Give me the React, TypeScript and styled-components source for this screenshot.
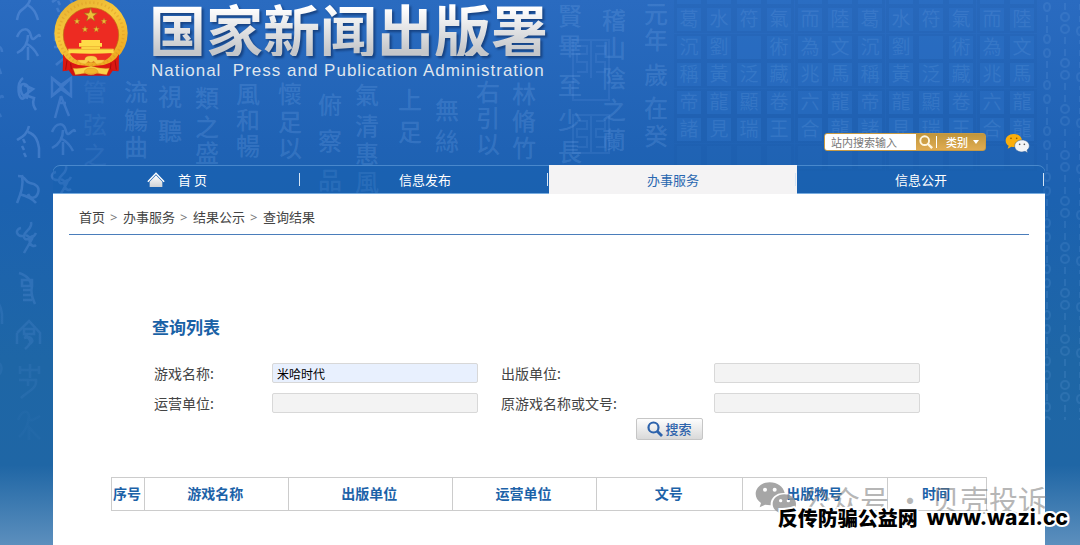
import React from 'react';
import styled, { createGlobalStyle } from 'styled-components';

const sans = `"Noto Sans", "Noto Sans CJK SC", sans-serif`;
const cjk = `"Noto Sans CJK SC", "Liberation Sans", sans-serif`;

const GlobalStyle = createGlobalStyle`
  * { box-sizing: border-box; }
  body { margin: 0; font-family: ${cjk}; color: #444; background: #5c8fbd; }
  a { color: inherit; text-decoration: none; }
`;

const Page = styled.div`
  position: relative;
  min-height: 100vh;
  padding: 0 35px 0 53px;
  overflow: hidden;
  display: flex;
  flex-direction: column;
  background: linear-gradient(#2a6bc0 0, #1f62b4 150px, #1c62b0 200px, #1e66a6 360px, #1f66a5 465px, #5c8fbd 545px);
`;

const Backdrop = styled.svg`
  position: absolute;
  left: 0;
  top: 0;
`;

const Header = styled.header`
  position: relative;
  height: 165px;
  display: flex;
  flex-direction: column;
  justify-content: space-between;
`;

const Brand = styled.div`
  display: flex;
  gap: 21px;
  padding-left: 1px;
`;

const BrandText = styled.div`
  display: flex;
  flex-direction: column;
`;

const SiteName = styled.h1`
  margin: 0;
  font-size: 57px;
  line-height: 56px;
  font-weight: 700;
  white-space: nowrap;
  color: transparent;
  background: linear-gradient(#fff 8px, #c4c6c9 52px);
  background-clip: text;
  -webkit-background-clip: text;
  filter: drop-shadow(2px 2px 1px rgba(10, 40, 90, 0.6));
`;

const SiteNameEn = styled.p`
  margin: 5px 0 0 2px;
  font: 17px/20px "Liberation Sans", Arial, sans-serif;
  letter-spacing: 1px;
  white-space: pre;
  color: #dfe5ee;
`;

const Tools = styled.div`
  display: flex;
  justify-content: flex-end;
  align-items: center;
  gap: 19px;
  padding: 0 15px 12px 0;
`;

const SiteSearch = styled.form`
  display: flex;
  align-items: center;
  width: 162px;
  height: 18px;
  border: 1px solid #c79a45;
  border-radius: 3px;
  overflow: hidden;
  background: linear-gradient(#c0963c, #e0ac52);
`;

const SiteSearchInput = styled.input`
  width: 91px;
  height: 16px;
  padding: 0 6px;
  border: 0;
  outline: 0;
  background: #fff;
  font: 11px/16px ${cjk};
  &::placeholder { color: #777; opacity: 1; }
`;

const SiteSearchButton = styled.button`
  display: flex;
  width: 21px;
  height: 12px;
  padding: 0 3px;
  border: 0;
  border-right: 1px solid #fff;
  align-items: center;
  background: none;
`;

const CategorySelect = styled.select`
  flex: 1;
  height: 16px;
  padding: 0 0 0 9px;
  border: 0;
  appearance: none;
  color: #fff;
  font: 500 11px/16px ${cjk};
  background: url("data:image/svg+xml,%3Csvg xmlns='http://www.w3.org/2000/svg' width='6' height='5'%3E%3Cpath d='M0 0h6L3 4z' fill='white'/%3E%3C/svg%3E") no-repeat right 6px center;
`;

const WeChatLink = styled.a`
  display: flex;
  padding-top: 2px;
`;

const Nav = styled.nav`
  position: relative;
  display: grid;
  grid-template-columns: repeat(4, 1fr);
  height: 29px;
  border-radius: 7px 7px 0 0;
  background: rgba(20, 95, 175, 0.3);
  box-shadow: inset 0 1px rgba(120, 175, 230, 0.5), inset 0 -1px #78acdf;
`;

const NavLink = styled.a<{ $active?: boolean }>`
  position: relative;
  display: flex;
  align-items: center;
  justify-content: center;
  gap: 13px;
  font-size: 13px;
  line-height: 20px;
  color: ${p => (p.$active ? '#2a67b0' : '#fff')};
  background: ${p => (p.$active ? '#f4f3f4' : 'transparent')};
  &::after {
    content: "";
    position: absolute;
    right: 1px;
    width: 1px;
    height: 13px;
    background: #d4e4f5;
  }
`;

const Panel = styled.main`
  position: relative;
  flex: 1;
  padding: 0 16px;
  background: #fff;
`;

const Breadcrumb = styled.nav`
  display: flex;
  align-items: center;
  gap: 5px;
  height: 41px;
  padding: 6px 10px 0;
  border-bottom: 1px solid #4a7dbb;
  font-size: 13px;
  line-height: 20px;
  color: #444;
`;

const Chevron = styled.span`
  width: 8px;
  font: 13px/20px ${sans};
  color: #777;
`;

const Query = styled.form`
  padding: 81px 109px 0 83px;
`;

const QueryTitle = styled.h2`
  margin: 0 0 20px;
  font-size: 17px;
  line-height: 22px;
  color: #1a62a6;
`;

const Fields = styled.div`
  display: grid;
  grid-template-columns: 120px 1fr 236px 1fr;
  grid-auto-rows: 30px;
  align-items: center;
`;

const Label = styled.label<{ $second?: boolean }>`
  padding-left: ${p => (p.$second ? 23 : 2)}px;
  font-size: 14px;
  line-height: 20px;
  white-space: nowrap;
`;

const Field = styled.input`
  height: 20px;
  min-width: 0;
  padding: 0 4px;
  border: 1px solid #d8d8d8;
  border-radius: 2px;
  outline: 0;
  font: 12px/18px ${cjk};
  color: #000;
  background: ${p => (p.defaultValue ? '#e8f0fe' : '#f3f3f3')};
`;

const SubmitRow = styled.div`
  display: flex;
  justify-content: center;
  padding-left: 267px;
`;

const SubmitButton = styled.button`
  display: flex;
  align-items: center;
  justify-content: center;
  gap: 2px;
  width: 67px;
  height: 22px;
  padding: 0;
  border: 1px solid #c6c6c6;
  border-radius: 2px;
  font: 500 13px/20px ${cjk};
  color: #2d63ac;
  background: linear-gradient(#fdfdfd, #d9d9d9);
`;

const TableWrap = styled.div`
  padding: 37px 42px 34px;
`;

const Results = styled.table`
  width: 100%;
  table-layout: fixed;
  border-collapse: collapse;
`;

const HeadCell = styled.th`
  height: 33px;
  padding: 0 2px 2px 0;
  border: 1px solid #ccc;
  font-size: 14px;
  line-height: 20px;
  color: #1c62a8;
  white-space: nowrap;
`;

const Watermark = styled.div`
  position: absolute;
  right: 33px;
  bottom: 24px;
  display: flex;
  align-items: center;
  gap: 5px;
  font: 29px/44px ${cjk};
  white-space: pre;
  color: rgba(110, 110, 110, 0.5);
`;

const Stamp = styled.div`
  position: absolute;
  right: 12px;
  bottom: 12px;
  display: flex;
  gap: 9px;
  font: 900 20px/30px ${cjk};
  color: #000;
  white-space: nowrap;
  -webkit-text-stroke: 4px #fff;
  paint-order: stroke fill;
`;

const StampCjk = styled.span`
  font-style: oblique 8deg;
`;

const StampUrl = styled.span`
  font-family: Inter, "Open Sans", sans-serif;
  font-size: 21px;
  font-weight: 800;
`;

/* Brush calligraphy columns: centre x, then characters with their centre y. */
const brush: [number, string, number[]][] = [
  [95, '管弦之', [92, 125, 155]],
  [136, '流觴曲', [92, 120, 147]],
  [170, '視聽', [97, 131]],
  [207, '類之盛', [98, 127, 153]],
  [248, '風和暢', [94, 120, 146]],
  [290, '懷足以', [94, 122, 148]],
  [330, '俯察品', [105, 141, 180]],
  [367, '氣清惠風', [95, 126, 154, 182]],
  [410, '上足', [100, 132]],
  [447, '無絲', [110, 141]],
  [488, '右引以', [92, 118, 144]],
  [524, '林脩竹', [94, 121, 148]],
  [570, '賢畢至少長', [16, 46, 85, 120, 152]],
  [614, '稽山陰之蘭', [20, 48, 78, 110, 140]],
  [656, '元年歲在癸', [14, 40, 75, 108, 136]],
];

/* Movable type blocks, one string per row; each row repeats after six blocks. */
const typeRows = ['', '葛水符氣而陸', '沉劉　術為文', '稱黃泛藏兆馬', '帝龍顯卷六龍', '諸見瑞王合龍', ''];

/* Ancient pictographs for the left margin, each in a 26 by 36 box. */
const pictographs = [
  'M3 8c8-8 16 2 10 10S4 22 2 34M12 4c8 0 12 4 12 8M13 19c6 4 8 8 10 15',
  'M2 10C6 0 14 0 16 9s8-6 9 1M13 8c0 10-5 15-11 18M12 17c6 3 9 8 11 12M13 20v13',
  'M8 3c-7 5-5 24 1 20s6-13 0-14-4 13 4 14M9 10l9 4-8 6 9 3c-2 6 0 9 2 12',
  'M14 2c-2 9-7 11-12 14M13 8c8 3 10 9 11 16v10M8 15l2 4M7 22l2 4M9 29l2 4',
  'M3 4c9 0 6 6 12 7s10 4 8 10-8 6-10 1M7 3c2 12-2 20-5 28M4 22c8 2 14 5 17 9',
  'M16 2c2 7-6 8-7 14s9 3 12-3M6 8a5 4 0 1 0 2 8M18 16a4 5 0 1 0 3 9M11 15l6 4-8 14',
  'M4 3c9 3 12 7 12 14M7 10h10v6H7zM8 20h9M8 25h9M8 30h9M17 16c-2 9 1 13 3 18',
  'M2 15L14 3l11 12v11M2 15v11M9 11h10v5H9zM9 20c8-3 12 4 4 7M10 17c8 6 6 9 0 14',
  'M5 3v8M24 3v8M5 7h19M15 1v14M4 17h17c1 9-8 11-15 18M13 16v7',
  'M3 12C8 0 14 3 14 9s6 2 11-1M14 9c-1 9-4 15-10 20M13 18c4 5 8 9 12 13M14 20v12',
];

const Scenery = () => (
  <Backdrop width="1080" height="500" viewBox="0 0 1080 500" aria-hidden="true">
    <defs>
      <linearGradient id="fade" x1="0" y1="0" x2="0" y2="36" gradientUnits="userSpaceOnUse">
        <stop offset="0" stopColor="#6f9fe6" />
        <stop offset="1" stopColor="#6f9fe6" />
      </linearGradient>
      <pattern id="rings" width="44" height="46" patternUnits="userSpaceOnUse" x="1040">
        <g fill="none" stroke="#7db0ee" strokeOpacity="0.14" strokeWidth="2">
          <ellipse cx="7" cy="7" rx="3" ry="4" />
          <path d="M7 15v7M7 26v7" />
          <ellipse cx="7" cy="39" rx="3" ry="4" />
          <path d="M25 3v7M25 37v7" />
          <ellipse cx="25" cy="17" rx="4" ry="4" />
          <ellipse cx="25" cy="29" rx="4" ry="4" />
          <path d="M40 4v6M40 16v6M40 40v4" />
          <ellipse cx="40" cy="31" rx="3" ry="4" />
        </g>
      </pattern>
    </defs>
    <g fill="none" stroke="url(#fade)" strokeWidth="2.5">
      {[-14, 27, 75, 124, 172, 220, 270, 318, 363, 408].map((y, i) => (
        <path key={y} d={pictographs[i]} opacity={i < 4 ? 0.4 : 0.4 - (i - 3) * 0.06} transform={`translate(15 ${y})`} />
      ))}
      {[3, 8, 1, 5].map((n, i) => (
        <path key={n} d={pictographs[n]} opacity="0.32" transform={`translate(50 ${[-14, 30, 122, 164][i]})`} />
      ))}
      {[40, 88, 192, 290, 350].map((y, i) => (
        <path key={y} d={pictographs[i]} opacity={0.3 - i * 0.05} transform={`translate(-22 ${y})`} />
      ))}
    </g>
    <path
      d="M52 78l9 7 10-7v18l-10-7-9 7zM52 78l19 18M71 78L52 96M61 96l-6 22M61 96l8 20M58 103h8"
      fill="none"
      stroke="#6f9fe6"
      strokeOpacity="0.35"
      strokeWidth="2.5"
    />
    <g fill="#78acec" fillOpacity="0.24" fontSize="24" fontWeight="500" textAnchor="middle" fontFamily={cjk}>
      {brush.flatMap(([x, chars, ys]) =>
        ys.map((y, i) => (
          <text key={`${x}-${y}`} x={x} y={y + 9} fillOpacity={x === 95 ? 0.12 : undefined}>
            {chars[i]}
          </text>
        )),
      )}
    </g>
    <g fill="none" stroke="#78acec" strokeOpacity="0.13" strokeWidth="2">
      {[40, 115].map(y => (
        <path key={y} d={`M573 ${y}h36v${y === 40 ? 60 : 38}h-36zM591 ${y}v38M577 ${y + 6}h10v8h-10v8h10v10h-10M596 ${y + 6}h9v8h-9v8h9v10h-9`} />
      ))}
    </g>
    <g fontSize="19" textAnchor="middle" fontFamily={cjk}>
      {typeRows.map((row, r) =>
        Array.from({ length: 12 }, (_, c) => {
          const x = 689 + Math.floor(c * 30.3);
          const y = -7 + Math.floor(r * 27.5);
          return (
            <g key={`${r}-${c}`}>
              <path d={`M${x - 15} ${y - 14}h30v27h-30z`} fill="#164f9c" fillOpacity="0.12" />
              <path d={`M${x - 12} ${y - 12}h24v23h-24z`} fill="#2f76cc" fillOpacity={r > 5 ? 0.15 : 0.38} />
              {row && <text x={x} y={y + 6} fill="#6ba2e2" fillOpacity="0.22">{row[c % 6]}</text>}
            </g>
          );
        }),
      )}
    </g>
    <path d="M1040 0h40v420h-40z" fill="url(#rings)" />
  </Backdrop>
);

const star = 'M0-10L2.4-3.2 9.5-3.1 3.8 1.2 5.9 8.1 0 4 -5.9 8.1 -3.8 1.2 -9.5-3.1 -2.4-3.2Z';

const Emblem = () => (
  <svg width="74" height="77" viewBox="0 0 222 231" role="img" aria-label="国徽">
    <defs>
      <linearGradient id="gold" x1="0" y1="0" x2="0.5" y2="1">
        <stop offset="0" stopColor="#e3ab2c" />
        <stop offset="0.5" stopColor="#f7c93e" />
        <stop offset="1" stopColor="#efab22" />
      </linearGradient>
    </defs>
    <path d="M28 160L26 214l18-3 12 16h110l10-15 17 2-2-54z" fill="#d3150f" />
    <ellipse cx="111" cy="99" rx="110" ry="106" fill="url(#gold)" />
    <ellipse cx="111" cy="102" rx="97" ry="94" fill="none" stroke="#d69220" strokeWidth="8" strokeDasharray="4 8" opacity="0.4" />
    <ellipse cx="111" cy="105" rx="83" ry="82" fill="#ed2b22" stroke="#bd6b12" strokeWidth="2" />
    <g fill="#edc039" stroke="#a46b18" strokeWidth="1">
      <path d={star} transform="translate(110 46) scale(2.1)" />
      <path d={star} transform="translate(69 64)" />
      <path d={star} transform="translate(150 64)" />
      <path d={star} transform="translate(93 88)" />
      <path d={star} transform="translate(127 88)" />
    </g>
    <path d="M82 120h56v9h6v11h-6v6h41v13q-68 4-136 0v-13h39v-6h-7v-11h7z" fill="#ffdc48" />
    <path d="M80 140h60M46 148h130" stroke="#e3a528" strokeWidth="2" />
    <path d="M48 162q63 4 126 0-12 18-34 24-8-14-29-14t-29 14q-22-6-34-24z" fill="#ee3022" />
    <path d="M27 162q14 26 46 33l38 4 38-4q32-7 46-33l-1 50q-16 2-24-8-14 16-30 14h-58q-16 2-30-14-8 10-24 8z" fill="#dc1712" />
    <path d="M70 180l22 0q1-13 19-12 18-1 19 12h22q-8 12-24 12l-9-8q-8 8-16 0l-9 8q-16 0-24-12z" fill="#f9cf49" stroke="#df9620" />
    <path d="M57 205q29 2 54-7 26 9 55 7l-8 19-30-4q-17 9-34 0l-30 4z" fill="#fbd24a" stroke="#c47716" />
    <path d="M39 181l-4 28M50 190l2 18M183 181l4 28M171 190l-2 18" stroke="#a90e0b" strokeWidth="3" />
    <path d="M90 218q2-14 21-14t22 14q-22 8-43 0z" fill="#f3b62c" stroke="#cf8216" />
  </svg>
);

const Magnifier = ({ size, color }: { size: number; color: string }) => (
  <svg width={size} height={size} viewBox="0 0 16 16" fill="none" stroke={color} aria-hidden="true">
    <circle cx="6.5" cy="6.5" r="5" strokeWidth="2.2" />
    <path d="M10 10l5 5" strokeWidth="2.8" />
  </svg>
);

const WeChat = () => (
  <svg width="25" height="20" viewBox="0 0 75 60" role="img" aria-label="微信">
    <path d="M26 3C11 3 2 12 2 23c0 7 4 12 9 15l-3 9 11-6c22 4 32-7 32-18C51 11 40 3 26 3z" fill="#fbae0b" />
    <circle cx="18" cy="16" r="2.5" fill="#8e5b00" />
    <circle cx="35" cy="16" r="2.5" fill="#8e5b00" />
    <path d="M51 21c-13 0-22 8-22 18s9 18 22 18l9-2 8 4-2-8c4-3 7-7 7-12 0-10-9-18-22-18z" fill="#f3f4f6" stroke="#315f96" strokeWidth="1.5" />
    <circle cx="44" cy="34" r="2.5" fill="#555" />
    <circle cx="58" cy="34" r="2.5" fill="#555" />
  </svg>
);

const WeChatGrey = () => (
  <svg width="42" height="36" viewBox="0 0 126 108" aria-hidden="true">
    <path
      fill="#969696"
      fillOpacity="0.85"
      fillRule="evenodd"
      d="M44 4C20 4 2 20 2 39c0 11 6 20 16 27l-4 13 16-8 17 2c-2-22 17-39 42-37C85 17 67 4 44 4zM30 20a6 6 0 1 1 0 12 6 6 0 0 1 0-12zM59 20a6 6 0 1 1 0 12 6 6 0 0 1 0-12z"
    />
    <path
      fill="#969696"
      fillOpacity="0.85"
      fillRule="evenodd"
      d="M88 40c-20 0-35 13-35 29s15 29 35 29l12-2 13 7-3-11c8-6 13-14 13-23 0-16-15-29-35-29zM77 54a5 5 0 1 1 0 10 5 5 0 0 1 0-10zM100 54a5 5 0 1 1 0 10 5 5 0 0 1 0-10z"
    />
  </svg>
);

const House = () => (
  <svg width="18" height="16" viewBox="0 0 54 48" aria-hidden="true">
    <defs>
      <linearGradient id="house" x1="0" y1="0" x2="0" y2="1">
        <stop offset="0" stopColor="#fff" />
        <stop offset="1" stopColor="#cfd2d6" />
      </linearGradient>
    </defs>
    <path d="M27 1l26 27-3 3-23-24L4 31l-3-3z" fill="#fff" />
    <path d="M27 10l19 19v16H8V29z" fill="url(#house)" />
  </svg>
);

const crumbs = ['首页', '办事服务', '结果公示', '查询结果'];

const fields = [
  { id: 'game', label: '游戏名称:', value: '米哈时代' },
  { id: 'publisher', label: '出版单位:', value: '' },
  { id: 'operator', label: '运营单位:', value: '' },
  { id: 'original', label: '原游戏名称或文号:', value: '' },
];

const columns = [
  { title: '序号', width: 33 },
  { title: '游戏名称', width: 144 },
  { title: '出版单位', width: 164 },
  { title: '运营单位', width: 145 },
  { title: '文号', width: 146 },
  { title: '出版物号', width: 145 },
  { title: '时间', width: 99 },
];

export default function App() {
  return (
    <Page>
      <GlobalStyle />
      <Scenery />
      <Header>
        <Brand>
          <Emblem />
          <BrandText>
            <SiteName>国家新闻出版署</SiteName>
            <SiteNameEn>National  Press and Publication Administration</SiteNameEn>
          </BrandText>
        </Brand>
        <Tools>
          <SiteSearch>
            <SiteSearchInput aria-label="站内搜索" placeholder="站内搜索输入" />
            <SiteSearchButton type="button" aria-label="搜索">
              <Magnifier size={14} color="#fff6df" />
            </SiteSearchButton>
            <CategorySelect aria-label="类别">
              <option>类别</option>
            </CategorySelect>
          </SiteSearch>
          <WeChatLink href="#wechat"><WeChat /></WeChatLink>
        </Tools>
      </Header>
      <Nav>
        <NavLink href="#home"><House />首 页</NavLink>
        <NavLink href="#news">信息发布</NavLink>
        <NavLink href="#services" $active>办事服务</NavLink>
        <NavLink href="#open">信息公开</NavLink>
      </Nav>
      <Panel>
        <Breadcrumb>
          {crumbs.map((name, i) => (
            <React.Fragment key={name}>
              {i > 0 && <Chevron>&gt;</Chevron>}
              <a href={`#crumb-${i}`}>{name}</a>
            </React.Fragment>
          ))}
        </Breadcrumb>
        <Query>
          <QueryTitle>查询列表</QueryTitle>
          <Fields>
            {fields.map((f, i) => (
              <React.Fragment key={f.id}>
                <Label htmlFor={f.id} $second={i % 2 === 1}>{f.label}</Label>
                <Field id={f.id} defaultValue={f.value} />
              </React.Fragment>
            ))}
          </Fields>
          <SubmitRow>
            <SubmitButton type="button">
              <Magnifier size={16} color="#2d63ac" />
              搜索
            </SubmitButton>
          </SubmitRow>
        </Query>
        <TableWrap>
          <Results>
            <colgroup>
              {columns.map(c => <col key={c.title} style={{ width: `${(c.width / 876) * 100}%` }} />)}
            </colgroup>
            <thead>
              <tr>{columns.map(c => <HeadCell key={c.title} scope="col">{c.title}</HeadCell>)}</tr>
            </thead>
          </Results>
        </TableWrap>
      </Panel>
      <Watermark><WeChatGrey />公众号 · 贝壳投诉</Watermark>
      <Stamp>
        <StampCjk>反传防骗公益网</StampCjk>
        <StampUrl>www.wazi.cc</StampUrl>
      </Stamp>
    </Page>
  );
}
